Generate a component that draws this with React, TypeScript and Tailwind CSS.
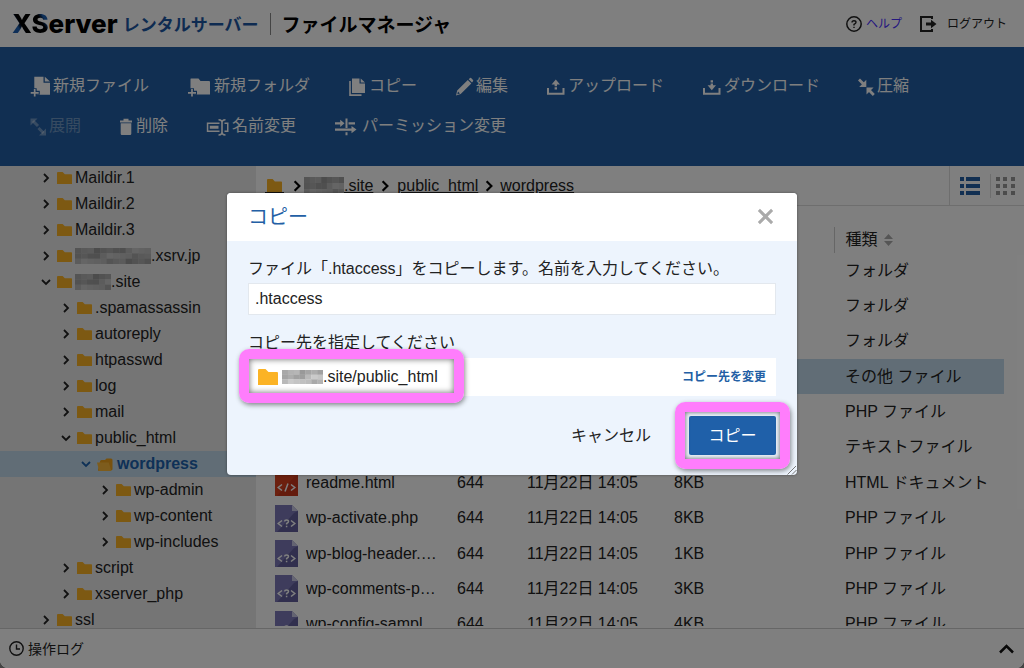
import React from "react";

const mosaicShades = [
  "#a9a9a9", "#b9b9b9", "#999999", "#c0c0c0", "#a1a1a1", "#b3b3b3", "#cacaca", "#a5a5a5",
  "#bcbcbc", "#9e9e9e", "#b6b6b6", "#c4c4c4", "#adadad",
];

function Mosaic({ cols, className }: { cols: number; className?: string }) {
  const cells = [];
  for (let r = 0; r < 3; r++) {
    for (let c = 0; c < cols; c++) {
      cells.push(
        <rect key={`${r}-${c}`} x={c} y={r} width="1.05" height="1.05" fill={mosaicShades[(c * 5 + r * 7) % 13]} />
      );
    }
  }
  return (
    <svg viewBox={`0 0 ${cols} 3`} preserveAspectRatio="none" className={className} aria-hidden="true">
      {cells}
    </svg>
  );
}

function Folder({ className }: { className?: string }) {
  return (
    <svg viewBox="0 0 20 16" preserveAspectRatio="none" className={className} aria-hidden="true">
      <path d="M0 1.2Q0 0 1.2 0H7.5L10.5 3H19Q20 3 20 4V16H0Z" fill="#fbb325" />
    </svg>
  );
}

function FolderOpen({ className }: { className?: string }) {
  return (
    <svg viewBox="0 0 17 13" className={className} aria-hidden="true">
      <path d="M3 3.5Q3 2 4.5 2H8L9.5 0.5H14Q15.5 0.5 15.5 2V11.5L13.5 13H2Q1 13 1 12Z" fill="#f0a31c" />
      <path d="M0 4.5H11.8L14.3 13H2.2Z" fill="#fbb93a" />
    </svg>
  );
}

function Chevron({ open, className }: { open?: boolean; className?: string }) {
  return (
    <svg viewBox="0 0 10 10" className={className} fill="none" stroke="currentColor" strokeWidth="1.8" aria-hidden="true">
      <path d={open ? "M1 3L5 7L9 3" : "M3 1L7 5L3 9"} />
    </svg>
  );
}

function Icon({ w, children }: { w: number; children: React.ReactNode }) {
  return (
    <svg width={w} height="22" viewBox={`0 0 ${w} 22`} fill="currentColor" className="shrink-0" aria-hidden="true">
      {children}
    </svg>
  );
}

const tools: { label: string; icon: React.ReactNode; disabled?: boolean }[] = [
  {
    label: "新規ファイル",
    icon: (
      <Icon w={21}>
        <path d="M4.300 1.700H13.500V7.800H20V19.700H4.300Z M14.800 1.700L20 6.500H14.800Z" />
        <path d="M4.700 13.200V22M0 17.800H9.800" stroke="#235fa5" strokeWidth="4" />
        <path d="M4.700 14V21.600M0.700 17.800H8.700" stroke="currentColor" strokeWidth="1.700" />
      </Icon>
    ),
  },
  {
    label: "新規フォルダ",
    icon: (
      <Icon w={25}>
        <path d="M3.500 4Q3.500 3.500 4 3.500H11.500L13.500 6H22Q23 6 23 7V19.500H3.500Z" />
        <path d="M5 13.200V22M0 17.800H10" stroke="#235fa5" strokeWidth="4" />
        <path d="M5 14V21.600M1 17.800H9" stroke="currentColor" strokeWidth="1.700" />
      </Icon>
    ),
  },
  {
    label: "コピー",
    icon: (
      <Icon w={19}>
        <path d="M4 3.500H11.500V8.500H17V18H4Z M12.700 3.500L17 7.400H12.700Z" />
        <path d="M1.200 6H2.800V19.300H13.500V20.900H1.200Z" />
      </Icon>
    ),
  },
  {
    label: "編集",
    icon: (
      <Icon w={19}>
        <path d="M1 20.500L2.200 15.600L12.800 5L16.300 8.500L5.700 19.100Z M13.700 4.200L15 3Q15.700 2.500 16.400 3.200L18 4.900Q18.600 5.600 18 6.300L17 7.500Z" />
        <path d="M2.300 19.200L3 16.500L4.900 18.500Z" fill="#235fa5" />
      </Icon>
    ),
  },
  {
    label: "アップロード",
    icon: (
      <Icon w={20}>
        <path d="M1 13H3V17.800H16.500V13H18.500V19.800H1Z" />
        <path d="M9.800 4.500L14 9.500H11V11.200H8.600V9.500H5.600Z M8.600 12.200H11V14.500H8.600Z" />
      </Icon>
    ),
  },
  {
    label: "ダウンロード",
    icon: (
      <Icon w={20}>
        <path d="M1 13H3V17.800H16.500V13H18.500V19.800H1Z" />
        <path d="M9.800 15.300L5.600 10.300H8.600V8.600H11V10.300H14Z M8.600 5.200H11V7.600H8.600Z" />
      </Icon>
    ),
  },
  {
    label: "圧縮",
    icon: (
      <Icon w={17}>
        <path d="M8.300 4.800V12H1.200Z M8.500 12.500H15.600L8.500 19.600Z" />
        <path d="M1 4.500L6 9.500M15.800 20L11 15" stroke="currentColor" strokeWidth="2.800" />
      </Icon>
    ),
  },
  {
    label: "展開",
    disabled: true,
    icon: (
      <Icon w={17}>
        <path d="M0.500 3.500H7.500L0.500 10.500Z M16 20.500H9L16 13.500Z" />
        <path d="M3 6L8 11M8.500 13L13.500 18" stroke="currentColor" strokeWidth="3" />
      </Icon>
    ),
  },
  {
    label: "削除",
    icon: (
      <Icon w={15}>
        <path d="M1 5.500H4.500V3.800H9.500V5.500H13V7.500H1Z M1.700 8.300H12.300V18.800Q12.300 20 11.100 20H2.900Q1.700 20 1.700 18.800Z" />
      </Icon>
    ),
  },
  {
    label: "名前変更",
    icon: (
      <Icon w={24}>
        <path d="M0.800 7.500H13.500V9H2.300V15.500H13.500V17H0.800Z M18.500 7.500H22.500V17H18.500V15.500H21V9H18.500Z M3.800 10.800H12.500V13.700H3.800Z" />
        <path d="M12.500 4Q15 4 16 5.200Q17 4 19.500 4V5.400Q16.800 5.400 16.800 7.300V17.300Q16.800 19.300 19.500 19.300V20.700Q17 20.700 16 19.500Q15 20.700 12.500 20.700V19.300Q15.200 19.300 15.200 17.300V7.300Q15.200 5.400 12.500 5.400Z" />
      </Icon>
    ),
  },
  {
    label: "パーミッション変更",
    icon: (
      <Icon w={26}>
        <path d="M1 7.200H6.200V4.700L10.500 8.300L6.200 11.900V9.400H1Z M11.500 3.500H13.500V13H11.500Z M14.500 7.200H21V9.400H14.500Z" />
        <path d="M1 13.500H17.500V11L22.500 14.600L17.500 18.200V15.700H1Z M11.500 17.300H13.500V20.300H11.500Z" />
      </Icon>
    ),
  },
];

const tree: { label: string; depth: number; open?: boolean; selected?: boolean; masked?: string; cols?: number }[] = [
  { label: "Maildir.1", depth: 0 },
  { label: "Maildir.2", depth: 0 },
  { label: "Maildir.3", depth: 0 },
  { label: ".xsrv.jp", depth: 0, masked: "w-[76px]", cols: 12 },
  { label: ".site", depth: 0, open: true, masked: "w-[36px]", cols: 6 },
  { label: ".spamassassin", depth: 1 },
  { label: "autoreply", depth: 1 },
  { label: "htpasswd", depth: 1 },
  { label: "log", depth: 1 },
  { label: "mail", depth: 1 },
  { label: "public_html", depth: 1, open: true },
  { label: "wordpress", depth: 2, open: true, selected: true },
  { label: "wp-admin", depth: 3 },
  { label: "wp-content", depth: 3 },
  { label: "wp-includes", depth: 3 },
  { label: "script", depth: 1 },
  { label: "xserver_php", depth: 1 },
  { label: "ssl", depth: 0 },
];
const indents = ["pl-[41px]", "pl-[61px]", "pl-[81px]", "pl-[100px]"];

type FileRow = { name?: string; kind?: "html" | "php"; perm?: string; date?: string; size?: string; type: string; selected?: boolean };
const date = "11月22日 14:05";
const files: FileRow[] = [
  { type: "フォルダ" },
  { type: "フォルダ" },
  { type: "フォルダ" },
  { type: "その他 ファイル", selected: true },
  { type: "PHP ファイル" },
  { type: "テキストファイル" },
  { name: "readme.html", kind: "html", perm: "644", date, size: "8KB", type: "HTML ドキュメント" },
  { name: "wp-activate.php", kind: "php", perm: "644", date, size: "8KB", type: "PHP ファイル" },
  { name: "wp-blog-header.php", kind: "php", perm: "644", date, size: "1KB", type: "PHP ファイル" },
  { name: "wp-comments-post.php", kind: "php", perm: "644", date, size: "3KB", type: "PHP ファイル" },
  { name: "wp-config-sample.php", kind: "php", perm: "644", date, size: "4KB", type: "PHP ファイル" },
];

function FileIcon({ kind }: { kind?: FileRow["kind"] }) {
  if (!kind) return <div className="h-[27px]" />;
  const php = kind === "php";
  return (
    <svg width="23" height="27" viewBox="0 0 23 27" className="block" aria-hidden="true">
      <path d="M0 0H17L23 6V27H0Z" fill={php ? "#7c79b8" : "#d9401f"} />
      <path d="M23 6V27H2L19 8Z" fill={php ? "#625f9c" : "#c8361a"} />
      <path d="M17 0L23 6H17Z" fill="#c9c8e4" />
      <g fill="none" stroke="#fff" strokeWidth="1.5">
        <path d="M7 15.500L3.200 18.500L7 21.500M16 15.500L19.800 18.500L16 21.500" />
        {php ? (
          <path d="M9.500 16.500Q9.700 15 11.500 15Q13.500 15 13.500 16.600Q13.500 17.600 11.600 18.500V19.600M11.600 20.800V22.300" />
        ) : (
          <path d="M13 14.500L10 22.500" />
        )}
      </g>
    </svg>
  );
}

export default function App() {
  return (
    <div className="h-screen bg-[#444] font-['Liberation_Sans','Noto_Sans_CJK_JP',sans-serif] text-base text-[#222]">
      <div className="relative flex h-full flex-col overflow-hidden rounded-b-lg bg-white">
        <header className="flex h-[47px] shrink-0 items-center justify-between pr-[17px] pl-3">
          <h1 className="flex items-center font-['Noto_Sans_CJK_JP',sans-serif] font-bold whitespace-nowrap">
            <span className="font-['Inter',sans-serif] text-[26px] leading-8 font-extrabold text-black">
              <span className="bg-linear-to-tr from-[#1d5fb0] from-35% to-black to-50% bg-clip-text text-transparent">X</span>
              <span className="bg-linear-to-tr from-black from-55% to-[#1d5fb0] to-70% bg-clip-text text-transparent">S</span>erver
            </span>
            <span className="ml-[5px] text-[17px] leading-6 text-[#1d57a3]">レンタルサーバー</span>
            <span className="mr-[10px] ml-3 h-[22px] w-px bg-[#888]" />
            <span className="text-[19px] leading-6 text-black">ファイルマネージャ</span>
          </h1>
          <nav className="flex items-center text-xs">
            <a href="#help" className="flex items-center gap-1 text-[#4a30ff]">
              <svg width="16" height="16" viewBox="0 0 16 16" fill="none" stroke="#222" aria-hidden="true">
                <circle cx="8" cy="8" r="7.200" strokeWidth="1.500" />
                <path d="M6 6.500Q6 4.700 8 4.700Q10 4.700 10 6.300Q10 7.300 8 8.400V9.500M8 10.700V12.100" strokeWidth="1.400" />
              </svg>
              ヘルプ
            </a>
            <a href="#logout" className="ml-[18px] flex items-center gap-[10px] text-[#222]">
              <svg width="17" height="16" viewBox="0 0 17 16" aria-hidden="true">
                <path d="M12 3V1H1V15H12V13" fill="none" stroke="#222" strokeWidth="2" />
                <path d="M6 6.500H11V3.700L16.500 8L11 12.300V9.500H6Z" fill="#222" />
              </svg>
              ログアウト
            </a>
          </nav>
        </header>

        <div className="flex shrink-0 flex-wrap gap-x-[38px] bg-[#235fa5] pt-[19px] pr-[30px] pb-5 pl-[30px]">
          {tools.map((t) => (
            <button key={t.label} type="button" disabled={t.disabled} className="flex h-10 items-center gap-[2px] whitespace-nowrap text-white disabled:text-white/35">
              {t.icon}
              <span className="leading-6">{t.label}</span>
            </button>
          ))}
        </div>

        <div className="flex min-h-0 flex-1">
          <aside className="w-[256px] shrink-0 overflow-hidden bg-[#ebebeb]">
            <ul className="-mt-px">
              {tree.map((n) => (
                <li key={n.label} className={`flex h-[26px] items-center pb-px ${indents[n.depth]} ${n.selected ? "bg-[#c3dbec] font-bold text-[#1d62ae]" : ""}`}>
                  <Chevron open={n.open} className="mt-px mr-[6px] size-[10px] shrink-0" />
                  {n.selected ? <FolderOpen className="mt-px mr-[3px] h-[13px] w-[17px] shrink-0" /> : <Folder className="mt-px mr-[3px] h-3 w-[15px] shrink-0" />}
                  {n.masked && <Mosaic cols={n.cols ?? 6} className={`h-4 shrink-0 ${n.masked}`} />}
                  <span>{n.label}</span>
                </li>
              ))}
            </ul>
          </aside>

          <main className="flex min-w-0 flex-1 flex-col">
            <div className="flex h-10 shrink-0 items-stretch justify-between border-b border-[#ddd] pl-[9px]">
              <nav className="flex items-center">
                <a href="#root" className="border-b border-[#222] px-[2px]" aria-label="ホーム">
                  <Folder className="h-[13px] w-[15px]" />
                </a>
                <Chevron className="mr-px ml-[7px] h-3 w-3 text-black" />
                <a href="#site" className="flex items-center underline">
                  <Mosaic cols={7} className="h-[18px] w-[40px]" />
                  .site
                </a>
                <Chevron className="mx-[6px] h-3 w-3 text-black" />
                <a href="#public_html" className="underline">public_html</a>
                <Chevron className="mx-[5px] h-3 w-3 text-black" />
                <a href="#wordpress" className="underline">wordpress</a>
              </nav>
              <div className="flex items-center border-l border-[#ddd]">
                <button type="button" aria-label="リスト表示" className="flex w-10 justify-center text-[#235fa5]">
                  <svg width="20" height="18" viewBox="0 0 20 18" fill="currentColor" aria-hidden="true">
                    <path d="M0 0H4V4H0ZM6 0H20V4H6ZM0 7H4V11H0ZM6 7H20V11H6ZM0 14H4V18H0ZM6 14H20V18H6Z" />
                  </svg>
                </button>
                <span className="h-6 w-px bg-[#ddd]" />
                <button type="button" aria-label="アイコン表示" className="flex w-[33px] justify-center pr-1 text-[#999]">
                  <svg width="19" height="18" viewBox="0 0 19 18" fill="currentColor" aria-hidden="true">
                    <path d="M0 0H4V4H0ZM7 0H11V4H7ZM15 0H19V4H15ZM0 7H4V11H0ZM7 7H11V11H7ZM15 7H19V11H15ZM0 14H4V18H0ZM7 14H11V18H7ZM15 14H19V18H15Z" />
                  </svg>
                </button>
              </div>
            </div>

            <div className="mb-[2px] min-h-0 flex-1 overflow-hidden pt-[21px] pr-5">
              <table className="h-[415px] w-full table-fixed border-collapse text-left">
                <colgroup>
                  <col className="w-[50px]" />
                  <col className="w-[151px]" />
                  <col className="w-[70px]" />
                  <col className="w-[147px]" />
                  <col className="w-[160px]" />
                  <col />
                </colgroup>
                <thead>
                  <tr className="h-[26px]">
                    <th colSpan={5} className="p-0" />
                    <th className="border-l border-[#ccc] p-0 pl-[11px] font-normal">
                      <span className="flex items-center gap-[6px]">
                        種類
                        <svg width="9" height="12" viewBox="0 0 9 12" fill="#aaa" aria-hidden="true">
                          <path d="M4.500 0L9 5H0ZM4.500 12L9 7H0Z" />
                        </svg>
                      </span>
                    </th>
                  </tr>
                </thead>
                <tbody>
                  {files.map((f, i) => (
                    <tr key={i} className={f.selected ? "bg-[#c3dbec]" : ""}>
                      <td className="p-0 pl-[19px]"><FileIcon kind={f.kind} /></td>
                      <td className="p-0 pr-4"><div className="truncate">{f.name}</div></td>
                      <td className="p-0">{f.perm}</td>
                      <td className="p-0 whitespace-nowrap">{f.date}</td>
                      <td className="p-0">{f.size}</td>
                      <td className="p-0 pl-[11px] whitespace-nowrap">{f.type}</td>
                    </tr>
                  ))}
                </tbody>
              </table>
            </div>
          </main>
        </div>

        <footer className="flex h-10 shrink-0 items-center justify-between border-t border-[#ccc] pr-[10px] pl-[9px]">
          <button type="button" className="flex items-center gap-1 text-sm">
            <svg width="15" height="15" viewBox="0 0 15 15" fill="none" stroke="currentColor" strokeWidth="1.4" aria-hidden="true">
              <circle cx="7.500" cy="7.500" r="6.700" />
              <path d="M7.500 3.500V8H11" />
            </svg>
            操作ログ
          </button>
          <button type="button" aria-label="開く">
            <svg width="15" height="10" viewBox="0 0 15 10" fill="none" stroke="#111" strokeWidth="2.5" aria-hidden="true">
              <path d="M1 8.500L7.500 2L14 8.500" />
            </svg>
          </button>
        </footer>

        <div className="absolute inset-0 flex items-center justify-center bg-black/50">
          <section role="dialog" aria-labelledby="copy-title" className="relative w-[570px] overflow-hidden rounded-[4px] bg-[#edf4fd] shadow-[0_0_3px_rgba(0,0,0,0.4)]">
            <div className="flex h-12 items-center justify-between bg-white pr-[23px] pb-px pl-[21px]">
              <h2 id="copy-title" className="text-xl leading-7 text-[#235fa5]">コピー</h2>
              <button type="button" aria-label="閉じる" className="text-[#aaa]">
                <svg width="17" height="17" viewBox="0 0 18 18" fill="none" stroke="currentColor" strokeWidth="3.2" aria-hidden="true">
                  <path d="M2 2L16 16M16 2L2 16" />
                </svg>
              </button>
            </div>
            <form className="px-[21px] pt-4 pb-5" onSubmit={(e) => e.preventDefault()}>
              <label htmlFor="copy-name" className="block leading-6">
                ファイル「.htaccess」をコピーします。名前を入力してください。
              </label>
              <input id="copy-name" type="text" defaultValue=".htaccess" className="mt-[2px] block h-8 w-full border border-[#e3e8ee] bg-white px-[6px] pb-px outline-none" />
              <p className="mt-4 leading-6">コピー先を指定してください</p>
              <div className="relative mt-[3px] flex h-[38px] items-center justify-between bg-white pr-[10px] pl-[10px]">
                <div className="flex items-center">
                  <Folder className="mr-[4px] h-4 w-5" />
                  <Mosaic cols={7} className="h-[14px] w-[41px]" />
                  <span>.site/public_html</span>
                </div>
                <button type="button" className="text-xs font-bold text-[#235fa5]">コピー先を変更</button>
                <span className="pointer-events-none absolute -top-[9px] -left-[9px] h-[54px] w-[225px] rounded-[10px] border-[10px] border-[#ff7dfc] shadow-[1px_2px_5px_rgba(0,0,0,0.45),inset_0_0_6px_rgba(0,0,0,0.6)]" />
              </div>
              <div className="mt-5 flex items-center justify-end">
                <button type="button" className="mr-[38px] leading-6">キャンセル</button>
                <div className="relative">
                  <button type="submit" className="block h-[39px] w-[87px] rounded-[2px] bg-[#1f60a9] leading-6 text-white">コピー</button>
                  <span className="pointer-events-none absolute -top-[14px] -left-[14px] h-[67px] w-[115px] rounded-[10px] border-[10px] border-[#ff7dfc] shadow-[1px_2px_5px_rgba(0,0,0,0.45),inset_0_0_5px_rgba(0,0,0,0.6)]" />
                </div>
              </div>
            </form>
            <svg width="10" height="10" viewBox="0 0 10 10" fill="none" stroke="#777" className="absolute right-0 bottom-0" aria-hidden="true">
              <path d="M0.500 9.500L9 1M5 9.500L9.500 5" />
            </svg>
          </section>
        </div>
      </div>
    </div>
  );
}
